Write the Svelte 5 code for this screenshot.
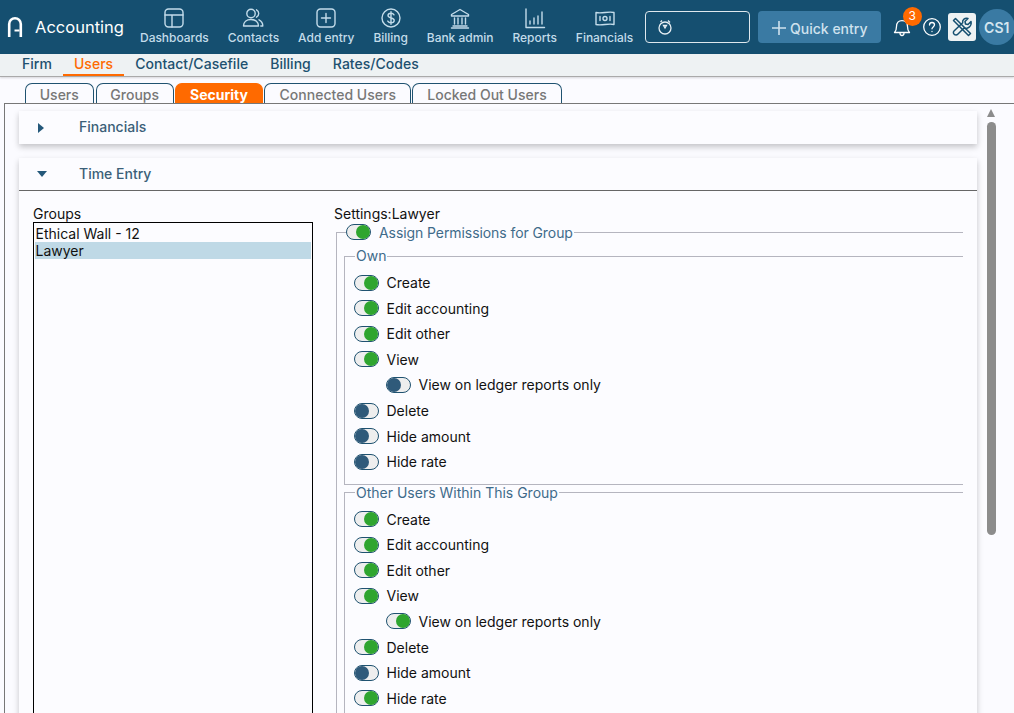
<script>
  const nav = ['Dashboards','Contacts','Add entry','Billing','Bank admin','Reports','Financials'];
  const sub = ['Firm','Users','Contact/Casefile','Billing','Rates/Codes'];
  const tabs = ['Users','Groups','Security','Connected Users','Locked Out Users'];
  const own = [['Create',1],['Edit accounting',1],['Edit other',1],['View',1],['View on ledger reports only',0,1],['Delete',0],['Hide amount',0],['Hide rate',0]];
  const other = [['Create',1],['Edit accounting',1],['Edit other',1],['View',1],['View on ledger reports only',1,1],['Delete',1],['Hide amount',0],['Hide rate',1]];
</script>

{#snippet toggle(on)}
  <span class="toggle" class:on><span class="knob"></span></span>
{/snippet}

{#snippet rows(list)}
  {#each list as [label, on, nested]}
    <div class="row" class:nested>{@render toggle(on)}<span>{label}</span></div>
  {/each}
{/snippet}

<div class="page">
  <header class="top">
    <div class="brand">
      <svg width="16" height="22" viewBox="0 0 16 22" fill="none" stroke="#fff" stroke-width="2.6"><path d="M2.2 21V8a5.8 5.8 0 0 1 11.6 0v13"/><path d="M7.5 14.500h5" stroke-width="2"/></svg>
      <span>Accounting</span>
    </div>
    <nav class="nav">
      {#each nav as item, i}
        <div class="nav-item">
          <svg width="22" height="22" viewBox="0 0 22 22" fill="none" stroke="#c3dcea" stroke-width="1.4" stroke-linecap="round" stroke-linejoin="round">
            {#if i === 0}
              <rect x="2" y="2" width="18" height="18" rx="3.5"/><path d="M2 8h18M9 8v12"/>
            {:else if i === 1}
              <circle cx="9" cy="6.5" r="4.2"/><path d="M1.5 19c0-4 3-6.5 7.5-6.5s7.5 2.500 7.500 6.500zM14.500 2.800a4.200 4.200 0 0 1 0 7.400M17 12.800c2.200 1 3.800 3 3.800 6.200h-2"/>
            {:else if i === 2}
              <rect x="2" y="2" width="18" height="18" rx="3.500"/><path d="M11 6.500v9M6.500 11h9"/>
            {:else if i === 3}
              <circle cx="11" cy="11" r="9"/><path d="M14 7.800c-.6-1-1.600-1.500-3-1.500-1.800 0-3 .9-3 2.300 0 3.200 6.200 1.500 6.200 4.800 0 1.400-1.300 2.300-3.200 2.300-1.500 0-2.600-.6-3.200-1.600M11 4.800v12.400"/>
            {:else if i === 4}
              <path d="M2.500 7.500 11 2.500l8.500 5v1.500h-17zM4 19h14M2.500 21h17M5.500 11v6M9 11v6M13 11v6M16.500 11v6"/>
            {:else if i === 5}
              <path d="M2 2v18.500h18.500M6 17v-3M10 17v-6M14 17v-8M18 17V5"/>
            {:else}
              <path d="M2 5.500c6 1.600 12-1.600 18 0v12c-6-1.600-12 1.600-18 0z"/><circle cx="11" cy="11.500" r="2"/><path d="M6 9.500v4M16 9.500v4"/>
            {/if}
          </svg>
          <span>{item}</span>
        </div>
      {/each}
    </nav>
    <div class="timer">
      <svg width="16" height="16" viewBox="0 0 16 16" fill="none" stroke="#e6eef3" stroke-width="1.300"><circle cx="8" cy="9" r="6"/><path d="M8 9 6.500 6.500h3zM11 1.500l2 2M5 1.500 3.500 3"/></svg>
    </div>
    <div class="quick">
      <svg width="16" height="16" viewBox="0 0 16 16" stroke="#cfe2ee" stroke-width="1.600"><path d="M8 1v14M1 8h14"/></svg>
      <span>Quick entry</span>
    </div>
    <div class="bell">
      <svg width="18" height="20" viewBox="0 0 18 20" fill="none" stroke="#fff" stroke-width="1.300" stroke-linejoin="round"><path d="M1.500 15.500c1.500-1.500 2-3 2-6 0-3.500 2-5.800 5.500-5.800s5.500 2.300 5.500 5.800c0 3 .5 4.500 2 6z"/><path d="M7 16c0 1.500.8 2.500 2 2.500s2-1 2-2.500"/></svg>
      <span class="badge">3</span>
    </div>
    <svg class="help" width="18" height="18" viewBox="0 0 18 18" fill="none" stroke="#fff" stroke-width="1.300" stroke-linecap="round"><circle cx="9" cy="9" r="8.300"/><path d="M6.500 7c0-1.500 1-2.500 2.500-2.500s2.500 1 2.500 2.300c0 2-2.500 2.200-2.500 4"/><path d="M9 13.500v.1"/></svg>
    <div class="tools">
      <svg width="22" height="22" viewBox="0 0 22 22" fill="none" stroke="#154f70" stroke-width="1.500" stroke-linejoin="round"><path d="M2.500 4.500 4.500 2.500 9 7l5 5 5.500 5.500-2 2L12 14 7 9z"/><path d="M20 5.500l-3 3-2.500-.5-.5-2.500 3-3c-3-1-6 1-5.300 4.300L3 15c-1.300 1.300-.5 4 2 4 .8 0 1.300-.3 2-1l6-6c3.500 1.500 8-1.500 7-6.500z"/></svg>
    </div>
    <div class="avatar">CS1</div>
  </header>

  <div class="subnav">
    {#each sub as item, i}
      <div class="sub-item" class:active={i === 1}>{item}</div>
    {/each}
  </div>

  <div class="tabs">
    {#each tabs as t, i}
      <div class="tab" class:active={i === 2}>{t}</div>
    {/each}
  </div>

  <main class="panel">
    <div class="content">
      <section class="acc closed">
        <div class="acc-head">
          <svg width="6" height="10" viewBox="0 0 6 10"><path d="M0 0l6 5-6 5z" fill="#24587a"/></svg>
          <span>Financials</span>
        </div>
      </section>
      <section class="acc">
        <div class="acc-head open">
          <svg width="10" height="6" viewBox="0 0 10 6"><path d="M0 0h10L5 6z" fill="#24587a"/></svg>
          <span>Time Entry</span>
        </div>
        <div class="acc-body">
          <div class="groups">
            <div class="cap">Groups</div>
            <div class="listbox">
              <div class="opt">Ethical Wall - 12</div>
              <div class="opt sel">Lawyer</div>
            </div>
          </div>
          <div class="settings">
            <div class="cap">Settings:Lawyer</div>
            <fieldset class="outer">
              <legend class="toggle-legend">{@render toggle(1)}<span>Assign Permissions for Group</span></legend>
              <fieldset class="inner">
                <legend>Own</legend>
                {@render rows(own)}
              </fieldset>
              <fieldset class="inner">
                <legend>Other Users Within This Group</legend>
                {@render rows(other)}
              </fieldset>
            </fieldset>
          </div>
        </div>
      </section>
    </div>
    <div class="scrollbar">
      <span class="arrow"></span>
      <span class="thumb"></span>
    </div>
  </main>
</div>

<style>
  :global(body) { margin: 0; background: #fbfbff; }
  .page { width: 1014px; height: 713px; overflow: hidden; display: flex; flex-direction: column; font-family: Inter, "Noto Sans", sans-serif; font-size: 14px; color: #111; background: #fbfbff; }

  .top { height: 54px; flex: none; background: #154f70; display: flex; align-items: center; color: #fff; box-sizing: border-box; }
  .brand { display: flex; align-items: center; gap: 12px; margin-left: 7px; width: 133px; flex: none; font-size: 16.500px; }
  .nav { display: flex; gap: 19px; flex: none; align-self: flex-start; margin-top: 7px; }
  .nav-item { display: flex; flex-direction: column; align-items: center; gap: 1px; font-size: 12px; font-weight: 500; color: #c3dcea; letter-spacing: -.03px; }
  .timer { margin-left: 11.600px; width: 105px; height: 32px; box-sizing: border-box; border: 1px solid #dfe8ee; border-radius: 4px; display: flex; align-items: center; padding-left: 11px; flex: none; }
  .quick { margin-left: 8px; width: 123px; height: 32px; box-sizing: border-box; padding-top: 2px; background: #3a7aa3; border-radius: 4px; display: flex; align-items: center; justify-content: center; gap: 3px; color: #cfe2ee; font-weight: 500; flex: none; }
  .bell { position: relative; margin-left: 12px; width: 18px; height: 20px; flex: none; }
  .badge { position: absolute; left: 10px; top: -10px; width: 19px; height: 19px; border-radius: 50%; background: #ff6a00; color: #fff; font-size: 12px; text-align: center; line-height: 18px; }
  .help { margin-left: 12px; flex: none; }
  .tools { margin-left: 7px; width: 28px; height: 28px; background: #eef2f3; border-radius: 3px; display: flex; align-items: center; justify-content: center; flex: none; }
  .avatar { margin-left: 3px; width: 36px; height: 36px; border-radius: 50%; background: #3a7aa3; color: #d5e6f0; font-weight: 600; font-size: 14px; display: flex; align-items: center; justify-content: center; flex: none; }

  .subnav { height: 23px; flex: none; box-sizing: border-box; background: #eef2f3; padding-left: 11px; display: flex; border-bottom: 1px solid #aaa; box-shadow: 0 1px 2px rgba(0,0,0,.15); }
  .sub-item { padding: 0 11px; color: #20506f; height: 20px; line-height: 20px; font-weight: 500; letter-spacing: .03px; }
  .sub-item.active { color: #ff6a00; border-bottom: 2px solid #ff6a00; }

  .tabs { margin-top: 6px; height: 20px; flex: none; display: flex; gap: 1px; padding-left: 25px; }
  .tab { box-sizing: border-box; height: 20px; padding: 0 13.700px; border: 1px solid #1f5270; border-bottom: none; border-radius: 7px 7px 0 0; color: #777; line-height: 21px; font-weight: 500; letter-spacing: .02px; }
  .tab:first-child { margin-right: 1px; }
  .tab.active { background: #ff6a00; border-color: #ff6a00; color: #fff; font-weight: 700; letter-spacing: 0; padding: 0 14.300px; }
  .tab:nth-child(4) { padding: 0 14.300px; }
  .tab:last-child { padding: 0 14.300px 0 14px; letter-spacing: 0; }

  .panel { flex: 1; min-height: 0; margin-left: 4px; border: 1px solid #777; border-bottom: none; border-right: none; display: flex; position: relative; box-sizing: border-box; padding: 7px 0 0 14px; }
  .content { width: 958px; flex: none; }

  .acc { background: #fcfcff; box-shadow: 0 3px 6px rgba(0,0,0,.22); }
  .acc.closed { margin-bottom: 14px; }
  .acc-head { height: 33px; display: flex; align-items: center; color: #3b5f78; font-weight: 500; box-sizing: border-box; }
  .acc-head svg { margin-left: 18px; flex: none; }
  .acc-head span { margin-left: 32px; padding-bottom: 2px; }
  .closed .acc-head svg { margin-left: 19px; margin-right: 3px; }
  .acc-head.open span { margin-left: 32px; }
  .acc-head.open { border-bottom: 1px solid #666; }
  .acc-body { display: flex; padding: 15px 14px 0 14px; height: 600px; box-sizing: border-box; }

  .cap { height: 16px; line-height: 16px; color: #111; }
  .groups { width: 280px; flex: none; }
  .listbox { width: 280px; height: 520px; box-sizing: border-box; border: 1px solid #000; padding: 2px 1px; }
  .opt { height: 17px; line-height: 17px; padding-left: .5px; }
  .opt.sel { background: #bfd9e6; }

  .settings { margin-left: 21px; flex: 1; min-width: 0; }
  fieldset { border: 1px solid #b5b5bf; margin: 0; min-width: 0; }
  .outer { padding: 0 0 0 7px; margin: 1px 0 0 2px; border-right: none; border-bottom: none; width: 627px; box-sizing: border-box; }
  .toggle-legend { display: flex; align-items: center; gap: 8px; padding: 0 1px 0 0; margin-left: 2px; color: #3f6b8a; height: 18px; letter-spacing: -.08px; }
  .inner { padding: 6.800px 0 9px 9px; margin: 0; border-right: none; }
  .inner:first-of-type { margin-top: 8px; }
  .inner:last-of-type { margin-top: 1px; padding-top: 6.700px; }
  .inner legend { padding: 0 1px; margin-left: 1px; color: #3f6b8a; height: 14px; line-height: 14px; }
  .row { display: flex; align-items: center; gap: 7.500px; height: 25.600px; }
  .row.nested { padding-left: 32px; }
  .toggle { width: 25px; height: 16px; box-sizing: border-box; border: 1px solid #1f5270; border-radius: 8px; background: #eeeeee; position: relative; flex: none; display: block; }
  .knob { position: absolute; left: 0; top: 0; width: 14px; height: 14px; border-radius: 50%; background: #2f5a7a; }
  .toggle.on .knob { left: 9px; background: #2fa52f; }

  .scrollbar { position: absolute; left: 982px; top: 0; width: 9px; bottom: 0; }
  .arrow { position: absolute; left: 0; top: 5px; width: 0; height: 0; border-left: 4.500px solid transparent; border-right: 4.500px solid transparent; border-bottom: 8px solid #8c8c8c; }
  .thumb { position: absolute; left: 0; top: 18px; width: 9px; height: 413px; background: #8c8c8c; border-radius: 5px; }
</style>
